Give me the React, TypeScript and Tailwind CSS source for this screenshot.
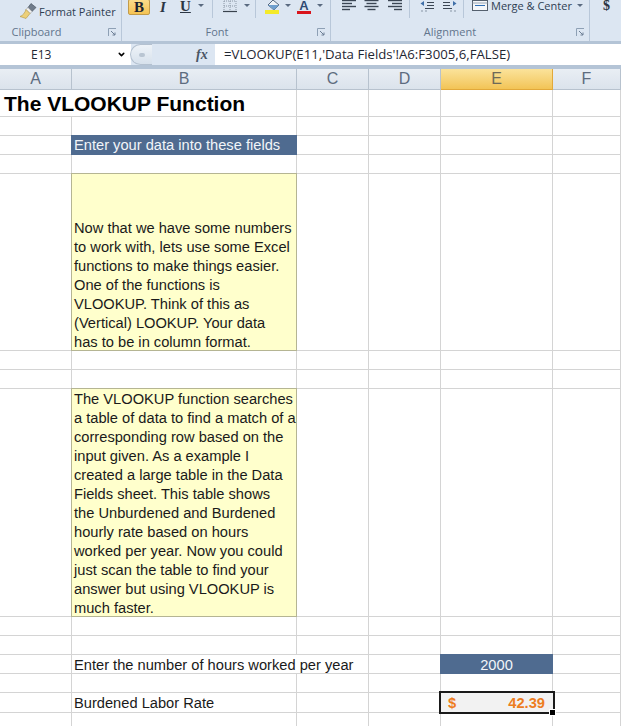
import { ChevronDown } from "lucide-react"
import type { ReactNode } from "react"

const Arrow = ({ className = "" }: { className?: string }) => (
  <div className={`w-0 h-0 border-x-[3px] border-x-transparent border-t-[3px] border-t-[#5a6a80] ${className}`} />
)

const Launcher = () => (
  <svg width="9" height="9" viewBox="0 0 9 9" className="shrink-0">
    <path d="M0.5 8V0.5H8" stroke="#8ea0b5" fill="none" />
    <path d="M3 3l4 4M7 4.5V7H4.5" stroke="#6d7f95" fill="none" />
  </svg>
)

const Lines = ({ kind }: { kind: "left" | "center" | "right" }) => {
  const rows = [
    [1, 14],
    [1, 10],
    [1, 14],
    [1, 8],
  ]
  return (
    <svg width="15" height="13" viewBox="0 0 15 13">
      {rows.map(([x, w], i) => {
        const start = kind === "left" ? x : kind === "center" ? (15 - w) / 2 : 15 - w
        return <path key={i} d={`M${start} ${1.5 + i * 3}h${w}`} stroke="#3b4654" strokeWidth="1.4" />
      })}
    </svg>
  )
}

const Indent = ({ flip = false }: { flip?: boolean }) => (
  <svg width="15" height="14" viewBox="0 0 15 14" className={flip ? "scale-x-[-1]" : ""}>
    <path d="M5 1.5h9M7 4.5h7M7 7.5h7M5 10.5h9" stroke="#3b4654" strokeWidth="1.2" />
    <path d="M4 3v5L0.5 5.5z" fill="#3f6fa8" />
    <path d="M1 13h2M5 13h2" stroke="#8895a5" />
  </svg>
)

// el label no esta centrado igual en cada grupo, por eso el padding va aparte
const GroupLabel = ({ children, className = "" }: { children: ReactNode; className?: string }) => (
  <div className={`h-[17px] flex items-center justify-center relative text-[11px] text-[#62758d] ${className}`}>
    {children}
    <span className="absolute right-[4px] top-[4px]">
      <Launcher />
    </span>
  </div>
)

const Ribbon = () => (
  <div className="h-[41px] bg-[#dce6f2] flex font-['Open_Sans',sans-serif] overflow-hidden">
    {/* Clipboard */}
    <div className="w-[122px] shrink-0 border-r border-[#b8c7d9]">
      <div className="h-[24px] flex items-start pl-[20px] pt-[3px] gap-[2px] text-[11px] text-[#2f3e52]">
        <svg width="17" height="16" viewBox="0 0 17 16">
          <path d="M11 0.5l5 4-4 4-4-4z" fill="#6f7c8c" stroke="#3f4957" strokeWidth="0.6" />
          <path d="M8 4.5l4 4-2 2-4-4z" fill="#f2f2f2" stroke="#8a8a8a" strokeWidth="0.5" />
          <path d="M6 6.5l4 4-4 5-6-2c3-1 5-4 6-7z" fill="#ecd07a" stroke="#a8892f" strokeWidth="0.5" />
        </svg>
        <span className="leading-[18px]">Format Painter</span>
      </div>
      <GroupLabel className="pr-[48px]">Clipboard</GroupLabel>
    </div>
    {/* Font */}
    <div className="w-[209px] shrink-0 border-r border-[#b8c7d9]">
      <div className="h-[24px] flex items-start">
        <div className="ml-[6px] w-[22px] h-[16px] -mt-[1px] bg-gradient-to-b from-[#fbdc8a] to-[#f5c352] border border-[#c29b4a] rounded-[2px] flex items-end justify-center">
          <span className="font-['Liberation_Serif',serif] font-bold text-[15px] leading-[14px] text-[#1c2430]">B</span>
        </div>
        <span className="ml-[10px] w-[10px] font-['Liberation_Serif',serif] italic font-bold text-[15px] leading-[14px] text-[#2b3644]">I</span>
        <span className="ml-[10px] font-['Liberation_Serif',serif] font-bold text-[15px] leading-[13px] underline text-[#2b3644]">U</span>
        <Arrow className="ml-[7px] mt-[4px]" />
        <div className="ml-[8px] w-px h-[18px] bg-[#b8c7d9]" />
        <svg width="14" height="13" viewBox="0 0 14 13" className="ml-[10px]">
          <path d="M1 1h12M1 6h12M7 1v10M1 1v10M13 1v10" stroke="#8b97a6" strokeDasharray="1 1" fill="none" />
          <path d="M0 11.5h14" stroke="#39424e" strokeWidth="1.2" />
        </svg>
        <Arrow className="ml-[7px] mt-[4px]" />
        <div className="ml-[5px] w-px h-[18px] bg-[#b8c7d9]" />
        <svg width="17" height="14" viewBox="0 0 17 14" className="ml-[9px]">
          <path d="M8 0l6 5-5 5-6-5z" fill="#eef2f6" stroke="#56687e" />
          <path d="M3 5h11l-5 5z" fill="#6fa0cf" />
          <rect x="0" y="10" width="14" height="4" fill="#f4ea2a" />
        </svg>
        <Arrow className="ml-[3px] mt-[4px]" />
        <div className="ml-[6px] w-[14px] flex flex-col items-center">
          <span className="font-['Liberation_Sans',sans-serif] font-bold text-[13px] leading-[11px] text-[#2f4a73]">A</span>
          <div className="w-[14px] h-[3px] bg-[#d9141c]" />
        </div>
        <Arrow className="ml-[6px] mt-[4px]" />
      </div>
      <GroupLabel className="pr-[18px]">Font</GroupLabel>
    </div>
    {/* Alignment */}
    <div className="w-[259px] shrink-0 border-r border-[#b8c7d9]">
      <div className="h-[24px] flex items-start">
        <div className="ml-[10px] -mt-[1px] flex gap-[8px]">
          <Lines kind="left" />
          <Lines kind="center" />
          <Lines kind="right" />
        </div>
        <div className="ml-[7px] w-px h-[18px] bg-[#b8c7d9]" />
        <div className="ml-[10px] -mt-[2px] flex gap-[7px]">
          <Indent />
          <Indent flip />
        </div>
        <div className="ml-[6px] w-px h-[18px] bg-[#b8c7d9]" />
        <svg width="16" height="12" viewBox="0 0 16 12" className="ml-[8px]">
          <rect x="0.5" y="0.5" width="15" height="10" fill="#f5f7fa" stroke="#55606e" />
          <path d="M3 5.5h10" stroke="#2f6fb5" />
          <path d="M0.5 3h15" stroke="#9aa5b2" />
        </svg>
        <span className="ml-[3px] text-[11px] leading-[11px] text-[#2f3e52] whitespace-nowrap">Merge &amp; Center</span>
        <Arrow className="ml-[5px] mt-[4px]" />
      </div>
      <GroupLabel className="pr-[20px]">Alignment</GroupLabel>
    </div>
    <div className="pl-[13px] font-['Liberation_Serif',serif] font-bold text-[14px] leading-[12px] text-[#2b3644]">$</div>
  </div>
)

const FormulaBar = () => (
  <div className="bg-[#dce6f2] border-t-[3px] border-[#b4c4d6] border-b-[4px] h-[28px] flex text-[#1f2733]">
    <div className="w-[131px] shrink-0 bg-white flex items-center pl-[31px] pr-[5px] justify-between font-['Open_Sans',sans-serif] text-[12px]">
      <span>E13</span>
      <ChevronDown size={9} strokeWidth={4} className="text-black" />
    </div>
    <div className="flex-1 flex items-center">
      <div className="w-[22px] h-[21px] -ml-[1px] rounded-l-full border border-[#b4c1d0] border-r-0 bg-gradient-to-b from-[#eef3f8] to-[#d7e1ec] flex items-center justify-center">
        <div className="w-[6px] h-[4px] rounded-full bg-[#b9c5d2]" />
      </div>
      <span className="ml-[44px] font-['Liberation_Serif',serif] italic font-bold text-[14px] text-[#4a5665]">fx</span>
    </div>
    <div className="w-[406px] shrink-0 bg-white pl-[9px] flex items-center font-['Open_Sans',sans-serif] text-[13.2px] whitespace-nowrap overflow-hidden">
      =VLOOKUP(E11,'Data Fields'!A6:F3005,6,FALSE)
    </div>
  </div>
)

const ColHeader = ({ label, active = false }: { label: string; active?: boolean }) => (
  <div
    className={`h-[21px] flex items-center justify-center text-[16px] border-r border-b ${
      active
        ? "bg-gradient-to-b from-[#fbe39a] to-[#f2c455] border-[#e2a93a] text-[#6e6a58]"
        : "bg-gradient-to-b from-[#e9eef4] to-[#dbe3ec] border-[#b7c2ce] text-[#5d6c7f]"
    }`}
  >
    {label}
  </div>
)

// minmax(0,1fr) para que el line-height no agrande la fila
const COLS = "grid grid-cols-[72px_225px_72px_72px_112px_1fr] grid-rows-[minmax(0,1fr)]"
const cell = "border-r border-b border-[#d4d4d4]"

const Row = ({ h, b, e }: { h: string; b?: ReactNode; e?: ReactNode }) => (
  <div className={`${COLS} ${h}`}>
    <div className={cell} />
    {b ?? <div className={cell} />}
    <div className={cell} />
    <div className={cell} />
    {e ?? <div className={cell} />}
    <div className={cell} />
  </div>
)

const intro = [
  "Now that we have some numbers",
  "to work with, lets use some Excel",
  "functions to make things easier.",
  "One of the functions is",
  "VLOOKUP. Think of this as",
  "(Vertical) LOOKUP. Your data",
  "has to be in column format.",
]

const explain = [
  "The VLOOKUP function searches",
  "a table of data to find a match of a",
  "corresponding row based on the",
  "input given. As a example I",
  "created a large table in the Data",
  "Fields sheet. This table shows",
  "the Unburdened and Burdened",
  "hourly rate based on hours",
  "worked per year. Now you could",
  "just scan the table to find your",
  "answer but using VLOOKUP is",
  "much faster.",
]

const Note = ({ lines, bottom = false }: { lines: string[]; bottom?: boolean }) => (
  <div
    className={`bg-[#ffffcc] border border-[#b5b593] -mt-px -ml-px pl-[2px] flex flex-col ${
      bottom ? "justify-end leading-[23px]" : "leading-[21px]"
    }`}
  >
    {lines.map((l) => (
      <div key={l} className="h-[19px] whitespace-nowrap">{l}</div>
    ))}
  </div>
)

const Sheet = () => (
  <div className="font-['Liberation_Sans',sans-serif] text-[14.67px] text-[#1a1a1a]">
    <div className={COLS}>
      <ColHeader label="A" />
      <ColHeader label="B" />
      <ColHeader label="C" />
      <ColHeader label="D" />
      <ColHeader label="E" active />
      <ColHeader label="F" />
    </div>
    <div className={`${COLS} h-[27px]`}>
      <div className={`col-span-2 ${cell} pl-[4px] text-[21px] font-bold text-black leading-[28px] whitespace-nowrap`}>
        The VLOOKUP Function
      </div>
      <div className={cell} />
      <div className={cell} />
      <div className={cell} />
      <div className={cell} />
    </div>
    <Row h="h-[19px]" />
    <Row h="h-[19px]" b={<div className="-mt-px -ml-px bg-[#4f6b90] text-[#f2f5f9] pl-[3px] leading-[21px]">Enter your data into these fields</div>} />
    <Row h="h-[19px]" />
    <Row h="h-[177px]" b={<Note lines={intro} bottom />} />
    <Row h="h-[19px]" />
    <Row h="h-[19px]" />
    <Row h="h-[228px]" b={<Note lines={explain} />} />
    <Row h="h-[19px]" />
    <Row h="h-[19px]" />
    <div className={`${COLS} h-[19px]`}>
      <div className={cell} />
      <div className={`col-span-2 ${cell} pl-[2px] leading-[20px] whitespace-nowrap`}>Enter the number of hours worked per year</div>
      <div className={cell} />
      <div className="-mt-px -ml-px bg-[#4f6b90] text-[#f2f5f9] text-center leading-[22px]">2000</div>
      <div className={cell} />
    </div>
    <Row h="h-[19px]" />
    <Row
      h="h-[20px]"
      b={<div className={`${cell} pl-[2px] leading-[20px]`}>Burdened Labor Rate</div>}
      e={
        <div className="relative z-10 mb-px bg-[#f2f2f2] flex justify-between items-center pl-[7px] pr-[8px] font-bold text-[#ed7d1f] outline-2 outline-[#1a1a1a]">
          <span>$</span>
          <span>42.39</span>
          <div className="absolute right-[-3px] bottom-[-4px] w-[5px] h-[5px] bg-black border border-white box-content" />
        </div>
      }
    />
    <Row h="h-[19px]" />
  </div>
)

export default function App() {
  return (
    <div className="w-[621px] h-[726px] overflow-hidden bg-white">
      <Ribbon />
      <FormulaBar />
      <Sheet />
    </div>
  )
}
